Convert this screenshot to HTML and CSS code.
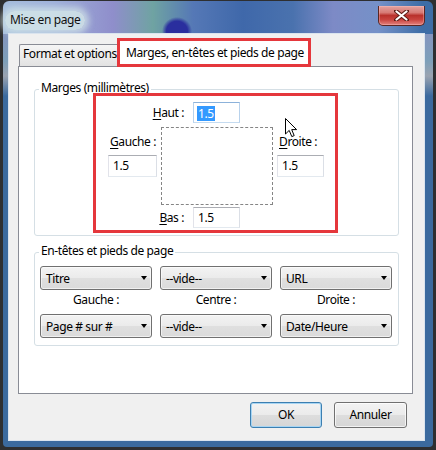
FILE: index.html
```html
<!DOCTYPE html>
<html lang="fr">
<head>
<meta charset="utf-8">
<title>Mise en page</title>
<link rel="stylesheet" href="styles.css">
</head>
<body>
<div class="window">
  <div class="titlebar">
    <span class="title">Mise en page</span>
    <div class="close">
      <svg width="15" height="11" viewBox="0 0 15 11"><path d="M2 1 L13 10 M13 1 L2 10" stroke="#5a1a14" stroke-width="4" stroke-linecap="round"/><path d="M2.5 1.5 L12.5 9.5 M12.5 1.5 L2.5 9.5" stroke="#fff" stroke-width="2.2" stroke-linecap="round"/></svg>
    </div>
  </div>
  <div class="client">
    <div class="tabs">
      <div class="tab">Format et options</div>
      <div class="tab active">Marges, en-têtes et pieds de page</div>
    </div>
    <div class="panel">
      <div class="group g-margins">
        <span class="legend">Marges (millimètres)</span>
        <div class="highlight margins">
          <div class="m-row m-top"><span class="m-label"><u>H</u>aut :</span><div class="field focus"><span class="sel">1.5</span></div></div>
          <div class="m-side m-left"><span class="s-label"><u>G</u>auche :</span><div class="field wide">1.5</div></div>
          <div class="m-page"></div>
          <div class="m-side m-right"><span class="s-label"><u>D</u>roite :</span><div class="field">1.5</div></div>
          <div class="m-row m-bottom"><span class="m-label"><u>B</u>as :</span><div class="field">1.5</div></div>
          <svg class="pointer" width="13" height="20" viewBox="0 0 13 20"><path d="M0.5 0.5 L0.5 16 L4.2 12.4 L6.8 18.6 L9.2 17.6 L6.7 11.6 L11.6 11.6 Z" fill="#fff" stroke="#000" stroke-width="1" stroke-linejoin="miter"/></svg>
        </div>
      </div>
      <div class="group g-hf">
        <span class="legend">En-têtes et pieds de page</span>
        <div class="hf">
          <div class="select"><span>Titre</span><i class="arrow"></i></div>
          <div class="select"><span>--vide--</span><i class="arrow"></i></div>
          <div class="select"><span>URL</span><i class="arrow"></i></div>
          <div class="hf-label">Gauche :</div>
          <div class="hf-label">Centre :</div>
          <div class="hf-label">Droite :</div>
          <div class="select"><span>Page # sur #</span><i class="arrow"></i></div>
          <div class="select"><span>--vide--</span><i class="arrow"></i></div>
          <div class="select"><span>Date/Heure</span><i class="arrow"></i></div>
        </div>
      </div>
    </div>
    <div class="buttons">
      <button class="btn default">OK</button>
      <button class="btn cancel">Annuler</button>
    </div>
  </div>
</div>
</body>
</html>
```

FILE: styles.css
```css
html, body {
  margin: 0;
  padding: 0;
}
body {
  background: #2e2f31;
  font-family: "Noto Sans", "Open Sans", sans-serif;
  font-size: 12px;
  letter-spacing: -0.4px;
  color: #000;
  height: 450px;
  overflow: hidden;
}
.window {
  margin: 1px 3px 0 3px;
  width: 430px;
  height: 446px;
  box-sizing: border-box;
  padding: 0 8px 6px 5px;
  border-radius: 6px 6px 4px 4px;
  display: flex;
  flex-direction: column;
  background-color: #3b6a9e;
  background-image:
    radial-gradient(ellipse 15px 14px at 174px 30px, #2a2e9e 0, #2a2e9e 70%, rgba(42,46,158,0) 100%),
    linear-gradient(90deg, #a4bcdc 0, #9eb0da 50px, #8f8ecb 110px, #6fa3a2 150px, #5578b6 190px, #3f68aa 240px, #4a72ae 290px, #7d8ac6 330px, #7591c8 375px, #3d6da6 420px, #3d6da6 430px),
    linear-gradient(180deg, #8c89c6 0, #7d9fb9 60px, #9aa3b0 75px, #3b6a9e 95px);
  background-size: 100% 33px, 100% 33px, 100% 100%;
  background-repeat: no-repeat;
}
.titlebar {
  height: 32px;
  flex: none;
  display: flex;
  align-items: flex-start;
}
.title {
  margin: 10px 0 0 -3px;
  padding: 1px 5px 3px;
  line-height: 15px;
  border-radius: 10px;
  background: rgba(214, 232, 232, 0.8);
  box-shadow: 0 0 6px 4px rgba(214, 232, 232, 0.7);
  color: #111;
}
.close {
  margin: 5px 0 0 auto;
  width: 47px;
  height: 20px;
  box-sizing: border-box;
  border: 1px solid #5b2622;
  border-top: 0;
  border-radius: 0 0 5px 5px;
  background: linear-gradient(180deg, #e3a3a0 0%, #d77a75 35%, #b9312c 50%, #c9443f 72%, #e2837e 100%);
  box-shadow: inset 0 0 0 1px rgba(255,200,200,0.35);
  display: flex;
  align-items: center;
  justify-content: center;
}
.client {
  flex: 1;
  box-sizing: border-box;
  border: 1px solid #dae4ee;
  background: #f0f0f0;
  padding: 4px 11px 0 9px;
  display: flex;
  flex-direction: column;
}
.tabs {
  display: flex;
  align-items: flex-end;
  height: 28px;
  padding-left: 1px;
}
.tab {
  box-sizing: border-box;
  height: 22px;
  width: 98px;
  padding: 1px 0 0 3px;
  line-height: 15px;
  border: 1px solid #898c95;
  border-bottom: 0;
  border-right: 0;
  border-radius: 2px 0 0 0;
  background: linear-gradient(180deg, #f5f5f5 0%, #ececec 50%, #e2e2e2 100%);
  white-space: nowrap;
  overflow: hidden;
}
.tab.active {
  height: 29px;
  width: 194px;
  padding: 4px 0 0 6px;
  border: 3px solid #e5373c;
  border-radius: 0;
  background: #fff;
  margin-bottom: -1px;
  position: relative;
  z-index: 1;
}
.panel {
  height: 328px;
  box-sizing: border-box;
  border: 1px solid #898c95;
  background: #fff;
  padding: 22px 13px 0 15px;
}
.group {
  position: relative;
  border: 1px solid #d5dfe5;
  border-radius: 3px;
}
.legend {
  position: absolute;
  left: 4px;
  top: -10px;
  padding: 0 2px;
  line-height: 15px;
  background: #fff;
  white-space: nowrap;
}
.g-margins {
  padding: 3px 0 2px 58px;
}
.highlight {
  border: 3px solid #e5373c;
  position: relative;
  z-index: 1;
}
.margins {
  width: 245px;
  height: 140px;
  box-sizing: border-box;
  display: grid;
  grid-template-columns: 12px 49px 4px 112px 4px 47px 1fr;
  grid-template-rows: 6px 21px 4px 78px 2px 21px 1fr;
}
.m-row {
  grid-column: 2 / 5;
  display: flex;
  align-items: center;
}
.m-top { grid-row: 2; }
.m-bottom { grid-row: 6; }
.m-label {
  width: 76px;
  text-align: right;
  line-height: 21px;
  white-space: nowrap;
}
.m-row .field {
  margin-left: 9px;
}
.m-side {
  grid-row: 4;
  padding-top: 7px;
}
.m-left { grid-column: 2; }
.m-right { grid-column: 6; }
.s-label {
  display: block;
  padding-left: 2px;
  line-height: 15px;
  white-space: nowrap;
}
.m-side .field {
  margin-top: 6px;
  height: 22px;
  line-height: 20px;
}
.m-page {
  grid-row: 4;
  grid-column: 4;
  border: 1px dashed #858585;
}
u {
  text-decoration: underline;
  text-underline-offset: 2px;
}
.field {
  box-sizing: border-box;
  width: 47px;
  height: 21px;
  line-height: 19px;
  padding-left: 4px;
  border: 1px solid;
  border-color: #abadb3 #dbdfe6 #e3e9ef #e2e3ea;
  background: #fff;
}
.field.wide {
  width: 49px;
}
.field.focus {
  border-color: #8cb2da #b8d2ec #c5dbf0 #b8d2ec;
  padding-left: 3px;
}
.sel {
  display: inline-block;
  background: #3399ff;
  color: #fff;
  line-height: 15px;
  padding: 0 1px;
  vertical-align: middle;
}
.pointer {
  position: absolute;
  left: 189px;
  top: 22px;
}
.g-hf {
  margin-top: 16px;
}
.hf {
  display: grid;
  grid-template-columns: repeat(3, 112px);
  grid-template-rows: 24px 24px 24px;
  column-gap: 8px;
  padding: 13px 0 7px 5px;
}
.select {
  box-sizing: border-box;
  height: 24px;
  border: 1px solid #707070;
  border-radius: 3px;
  background: linear-gradient(180deg, #f3f3f3 0%, #ebebeb 48%, #dfdfdf 52%, #dadada 100%);
  box-shadow: inset 0 0 0 1px rgba(255,255,255,0.6);
  display: flex;
  align-items: center;
  justify-content: space-between;
  padding: 0 4px 0 5px;
  white-space: nowrap;
}
.arrow {
  width: 0;
  height: 0;
  border-left: 3.5px solid transparent;
  border-right: 3.5px solid transparent;
  border-top: 4px solid #000;
}
.hf-label {
  text-align: center;
  line-height: 20px;
}
.buttons {
  display: flex;
  justify-content: flex-end;
  gap: 12px;
  margin-top: 8px;
  padding-right: 6px;
}
.btn {
  box-sizing: border-box;
  height: 26px;
  font-family: inherit;
  font-size: 12px;
  letter-spacing: -0.4px;
  color: #000;
  border: 1px solid #707070;
  border-radius: 3px;
  background: linear-gradient(180deg, #f3f3f3 0%, #ebebeb 48%, #dddddd 52%, #d6d6d6 100%);
  box-shadow: inset 0 0 0 1px rgba(255,255,255,0.7);
  padding: 0 0 2px;
}
.btn.default {
  width: 72px;
  border-color: #3c7fb1;
  box-shadow: inset 0 0 0 1px #a7d5f3;
}
.btn.cancel {
  width: 73px;
}
```
